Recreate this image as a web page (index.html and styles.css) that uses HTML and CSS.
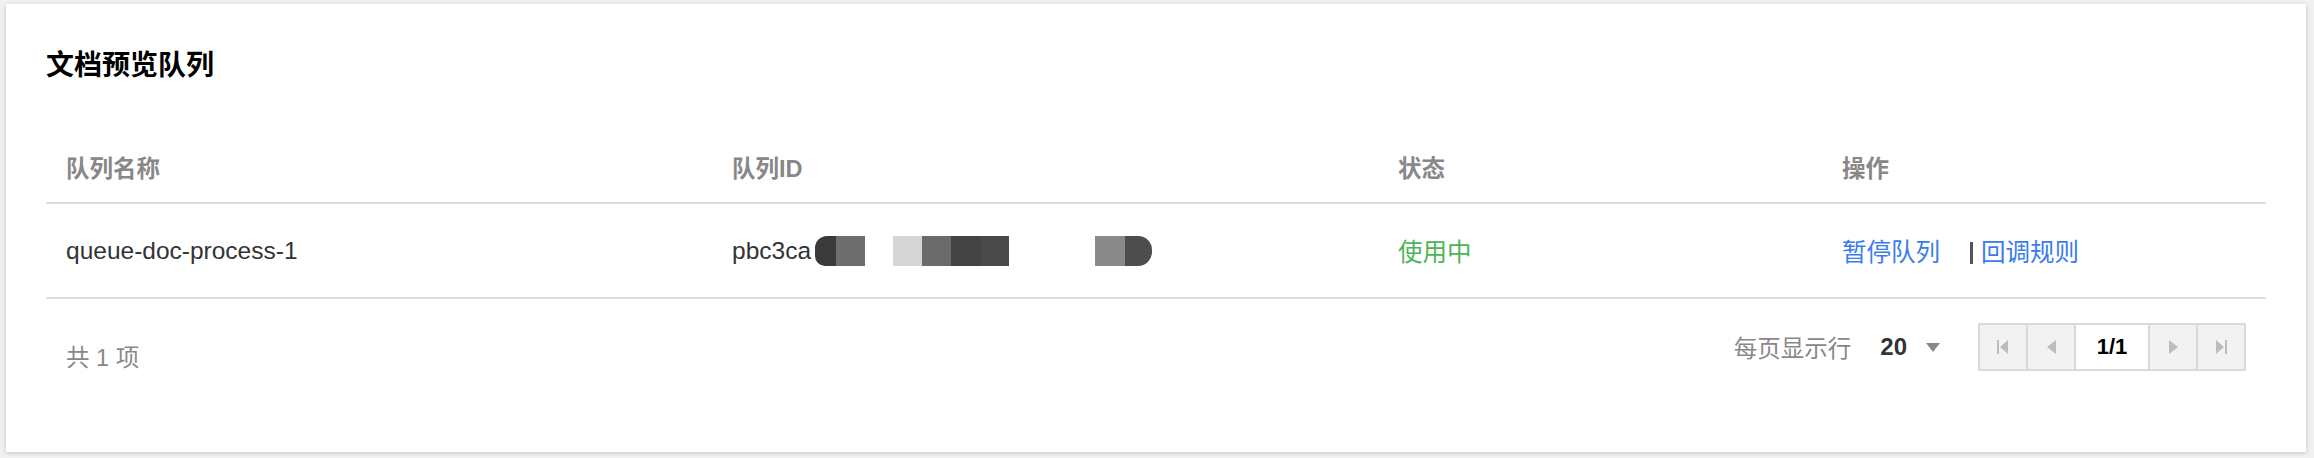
FILE: index.html
```html
<!DOCTYPE html>
<html lang="zh-CN">
<head>
  <meta charset="UTF-8">
  <meta name="viewport" content="width=device-width, initial-scale=1.0">
  <title>文档预览队列</title>
  <link rel="stylesheet" href="styles.css">
</head>
<body>

  <!-- Queue list card -->
  <div class="card">
    <h2 class="card-title">文档预览队列</h2>

    <table class="queue-table">
      <colgroup>
        <col class="col-wide">
        <col class="col-wide">
        <col class="col-narrow">
        <col class="col-narrow">
      </colgroup>
      <thead>
        <tr>
          <th>队列名称</th>
          <th>队列ID</th>
          <th>状态</th>
          <th>操作</th>
        </tr>
      </thead>
      <tbody>
        <tr>
          <td>queue-doc-process-1</td>
          <td>
            <span class="queue-id">pbc3ca<span class="mask">
              <i class="blk blk-first"></i><i class="blk blk-mid"></i><i class="blk blk-gap"></i><i class="blk blk-light"></i><i class="blk blk-mid2"></i><i class="blk blk-dark"></i><i class="blk blk-dark2"></i><i class="blk blk-gap-wide"></i><i class="blk blk-grey"></i><i class="blk blk-last"></i>
            </span></span>
          </td>
          <td><span class="status-on">使用中</span></td>
          <td class="actions">
            <a href="#">暂停队列</a><span class="sep"></span><a href="#">回调规则</a>
          </td>
        </tr>
      </tbody>
    </table>

    <!-- Footer: total count and pager -->
    <div class="table-footer">
      <span class="total">共 1 项</span>
      <div class="pager">
        <span class="page-size-label">每页显示行</span>
        <span class="page-size">20</span>
        <span class="page-size-arrow"></span>
        <div class="pager-box">
          <button class="pager-btn" aria-label="first">
            <svg width="12" height="14" viewBox="0 0 12 14"><rect x="0" y="0" width="2" height="14" fill="#bcbcbc"/><path d="M11 0 L3 7 L11 14 Z" fill="#bcbcbc"/></svg>
          </button>
          <button class="pager-btn" aria-label="prev">
            <svg width="9" height="14" viewBox="0 0 9 14"><path d="M9 0 L0 7 L9 14 Z" fill="#bcbcbc"/></svg>
          </button>
          <span class="pager-current">1/1</span>
          <button class="pager-btn" aria-label="next">
            <svg width="9" height="14" viewBox="0 0 9 14"><path d="M0 0 L9 7 L0 14 Z" fill="#bcbcbc"/></svg>
          </button>
          <button class="pager-btn" aria-label="last">
            <svg width="12" height="14" viewBox="0 0 12 14"><path d="M1 0 L9 7 L1 14 Z" fill="#bcbcbc"/><rect x="10" y="0" width="2" height="14" fill="#bcbcbc"/></svg>
          </button>
        </div>
      </div>
    </div>
  </div>

</body>
</html>
```

FILE: styles.css
```css
/* Page */
body {
  margin: 0;
  padding: 4px 8px 6px 6px;
  background-color: #f0f0f0;
  font-family: 'Liberation Sans', 'Noto Sans CJK SC', sans-serif;
  color: #333;
}

/* Card */
.card {
  height: 448px;
  box-sizing: border-box;
  padding: 42px 40px 0;
  background: #fff;
  box-shadow: 0 1px 4px rgba(0, 0, 0, 0.18);
}

.card-title {
  margin: 0;
  height: 40px;
  line-height: 40px;
  font-size: 28px;
  font-weight: bold;
  color: #000;
}

/* Table */
.queue-table {
  width: 100%;
  margin-top: 46px;
  border-collapse: collapse;
  table-layout: fixed;
}

.col-wide { width: 30%; }
.col-narrow { width: 20%; }

.queue-table th {
  height: 70px;
  padding: 0 20px;
  text-align: left;
  vertical-align: middle;
  font-size: 23.5px;
  font-weight: bold;
  color: #888;
  border-bottom: 2px solid #dedede;
}

.queue-table td {
  height: 93px;
  padding: 0 20px;
  vertical-align: middle;
  font-size: 24.5px;
  color: #333;
  border-bottom: 2px solid #dedede;
  white-space: nowrap;
}

/* Redacted id */
.queue-id {
  display: inline-flex;
  align-items: center;
}

.mask {
  display: inline-flex;
  height: 30px;
  margin-left: 4px;
}

.blk {
  display: block;
  width: 29px;
  height: 30px;
}

.blk-first { width: 21px; background: #3a3a3a; border-radius: 12px 0 0 10px; }
.blk-mid { background: #6e6e6e; }
.blk-gap { width: 28px; }
.blk-light { background: #d6d6d6; }
.blk-mid2 { background: #6b6b6b; }
.blk-dark { width: 30px; background: #444; }
.blk-dark2 { width: 28px; background: #4a4a4a; }
.blk-gap-wide { width: 86px; }
.blk-grey { width: 30px; background: #8a8a8a; }
.blk-last { width: 27px; background: #4d4d4d; border-radius: 0 14px 14px 0; }

.status-on {
  color: #4cb459;
}

/* Row actions */
.actions a {
  color: #3a7cec;
  text-decoration: none;
}

.sep {
  display: inline-block;
  width: 3px;
  height: 22px;
  margin: 0 8px 0 30px;
  background: #555;
  vertical-align: -3px;
}

/* Footer */
.table-footer {
  display: flex;
  justify-content: space-between;
  align-items: flex-start;
  padding: 24px 20px 0;
}

.total {
  margin-top: 23px;
  line-height: 24px;
  font-size: 23.5px;
  color: #888;
}

.pager {
  display: flex;
  align-items: center;
  height: 48px;
}

.page-size-label {
  font-size: 23.5px;
  color: #888;
}

.page-size {
  margin-left: 29px;
  font-size: 24px;
  font-weight: bold;
  color: #333;
}

.page-size-arrow {
  width: 0;
  height: 0;
  margin-left: 19px;
  border-left: 7px solid transparent;
  border-right: 7px solid transparent;
  border-top: 9px solid #888;
}

.pager-box {
  display: flex;
  height: 48px;
  margin-left: 38px;
  box-sizing: border-box;
  border: 2px solid #d9d9d9;
}

.pager-btn {
  display: flex;
  align-items: center;
  justify-content: center;
  width: 48px;
  padding: 0;
  border: none;
  border-right: 2px solid #d9d9d9;
  background: #f2f2f2;
  cursor: pointer;
}

.pager-btn:last-child {
  width: 46px;
  border-right: none;
}

.pager-current {
  display: flex;
  align-items: center;
  justify-content: center;
  width: 72px;
  border-right: 2px solid #d9d9d9;
  background: #fff;
  font-size: 22px;
  font-weight: bold;
  color: #000;
}
```
